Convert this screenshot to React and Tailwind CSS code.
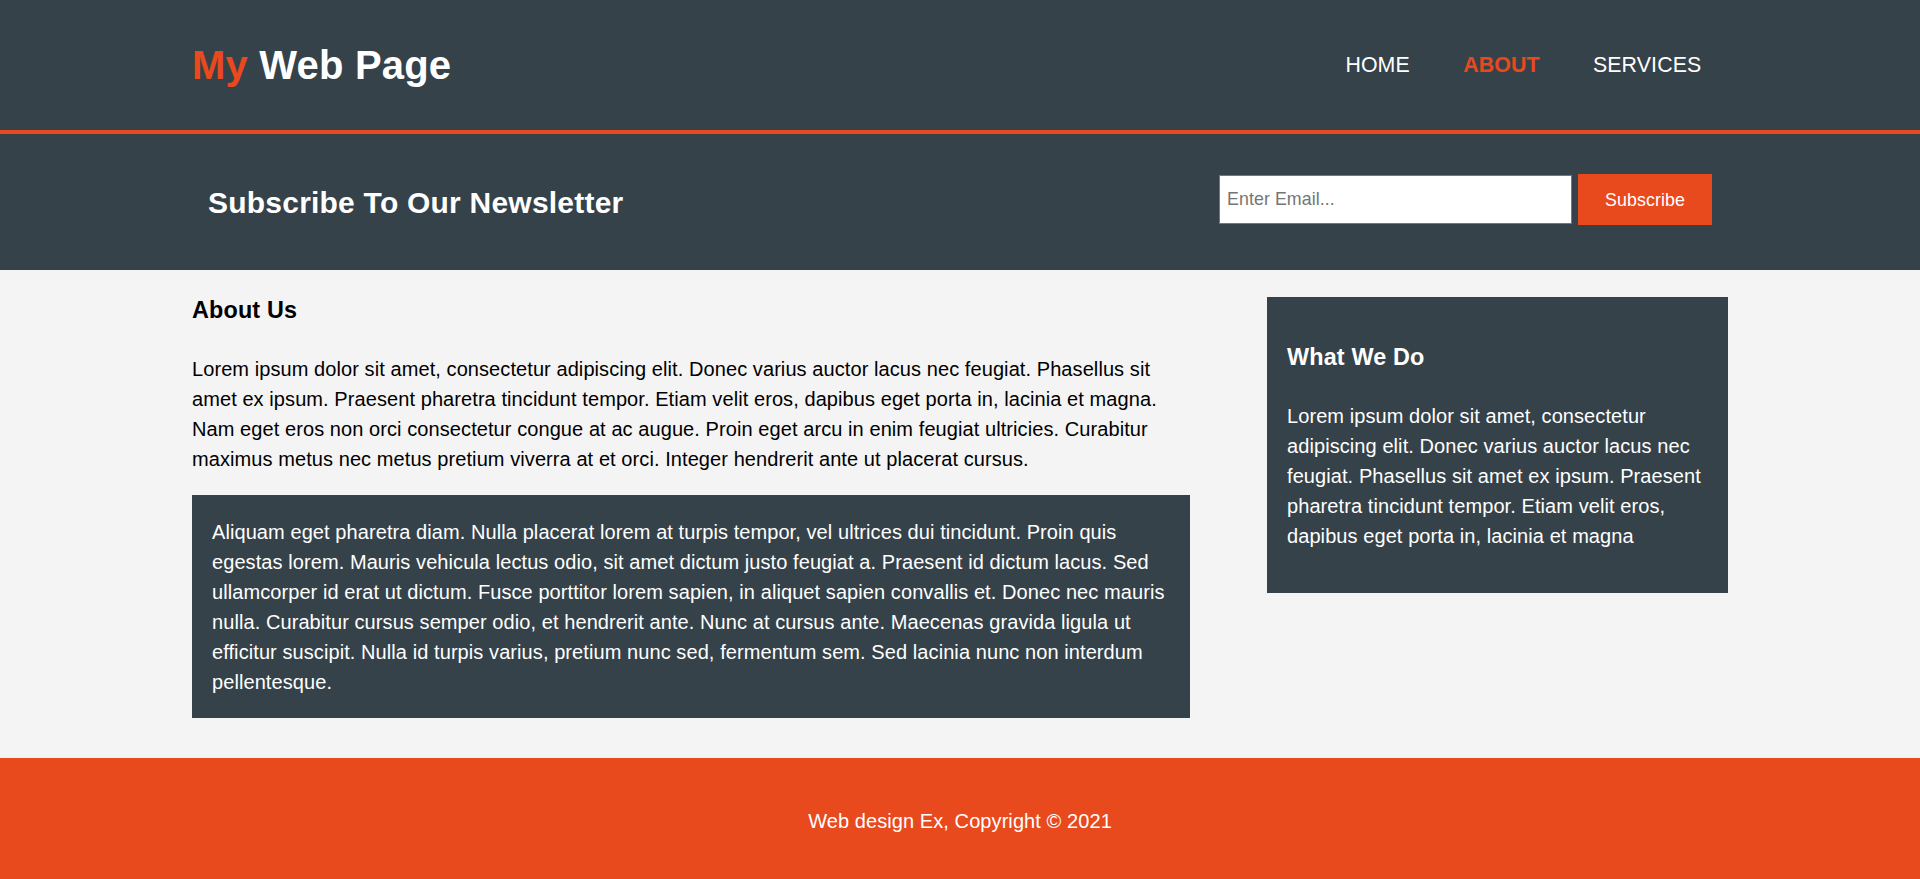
export default function App() {
  return (
    <div className="min-h-screen bg-[#f4f4f4] font-['Liberation_Sans',Arial,sans-serif] text-[20px] leading-[30px] text-black tracking-[0.08px]">
      <header className="h-[134px] bg-[#35424a] border-b-4 border-[#e8491d] text-white">
        <div className="mx-auto w-[1536px] flex justify-between items-start">
          <h1 className="pt-[35px] text-[40px] leading-[60px] font-bold tracking-[0.2px]">
            <span className="text-[#e8491d]">My</span> Web Page
          </h1>
          <nav className="pt-[49px]">
            <ul className="flex">
              <li className="px-[26.67px] text-[21.33px] leading-[32px] uppercase tracking-[0.12px]">Home</li>
              <li className="px-[26.67px] text-[21.33px] leading-[32px] uppercase font-bold text-[#e8491d] tracking-[0.12px]">About</li>
              <li className="px-[26.67px] text-[21.33px] leading-[32px] uppercase tracking-[0.12px]">Services</li>
            </ul>
          </nav>
        </div>
      </header>

      <section className="h-[136px] bg-[#35424a] text-white">
        <div className="mx-auto w-[1504px] flex justify-between items-start">
          <h2 className="mt-[45.5px] text-[30px] leading-[45px] font-bold tracking-[0.22px]">Subscribe To Our Newsletter</h2>
          <form className="mt-[40px] flex items-start gap-[6px]" onSubmit={(e) => e.preventDefault()}>
            <input
              type="email"
              placeholder="Enter Email..."
              className="mt-[1px] h-[49px] w-[353px] bg-white border border-[#767676] px-[7px] text-[17.8px] text-black placeholder:text-[#757575] outline-none"
            />
            <button type="submit" className="h-[51px] w-[134px] bg-[#e8491d] text-white text-[17.8px]">
              Subscribe
            </button>
          </form>
        </div>
      </section>

      <div className="mx-auto w-[1536px] flex items-start">
        <section className="w-[998px]">
          <h3 className="mt-[23px] text-[23.4px] leading-[35px] font-bold tracking-[0.15px]">About Us</h3>
          <p className="mt-[26px]">
            Lorem ipsum dolor sit amet, consectetur adipiscing elit. Donec varius auctor lacus nec feugiat. Phasellus sit amet ex ipsum. Praesent pharetra tincidunt tempor. Etiam velit eros, dapibus eget porta in, lacinia et magna. Nam eget eros non orci consectetur congue at ac augue. Proin eget arcu in enim feugiat ultricies. Curabitur maximus metus nec metus pretium viverra at et orci. Integer hendrerit ante ut placerat cursus.
          </p>
          <div className="mt-[21px] bg-[#35424a] text-white px-[20px] py-[21.5px]">
            Aliquam eget pharetra diam. Nulla placerat lorem at turpis tempor, vel ultrices dui tincidunt. Proin quis egestas lorem. Mauris vehicula lectus odio, sit amet dictum justo feugiat a. Praesent id dictum lacus. Sed ullamcorper id erat ut dictum. Fusce porttitor lorem sapien, in aliquet sapien convallis et. Donec nec mauris nulla. Curabitur cursus semper odio, et hendrerit ante. Nunc at cursus ante. Maecenas gravida ligula ut efficitur suscipit. Nulla id turpis varius, pretium nunc sed, fermentum sem. Sed lacinia nunc non interdum pellentesque.
          </div>
        </section>

        <aside className="ml-[77px] mt-[27px] w-[461px] bg-[#35424a] text-white px-[20px] pt-[20px] pb-[21.5px]">
          <h3 className="mt-[23.4px] text-[23.4px] leading-[35px] font-bold tracking-[0.15px]">What We Do</h3>
          <p className="mt-[26px] mb-[20px]">
            Lorem ipsum dolor sit amet, consectetur adipiscing elit. Donec varius auctor lacus nec feugiat. Phasellus sit amet ex ipsum. Praesent pharetra tincidunt tempor. Etiam velit eros, dapibus eget porta in, lacinia et magna
          </p>
        </aside>
      </div>

      <footer className="mt-[40px] bg-[#e8491d] text-white text-center pt-[48px] pb-[48px]">
        <p>Web design Ex, Copyright © 2021</p>
      </footer>
    </div>
  );
}
